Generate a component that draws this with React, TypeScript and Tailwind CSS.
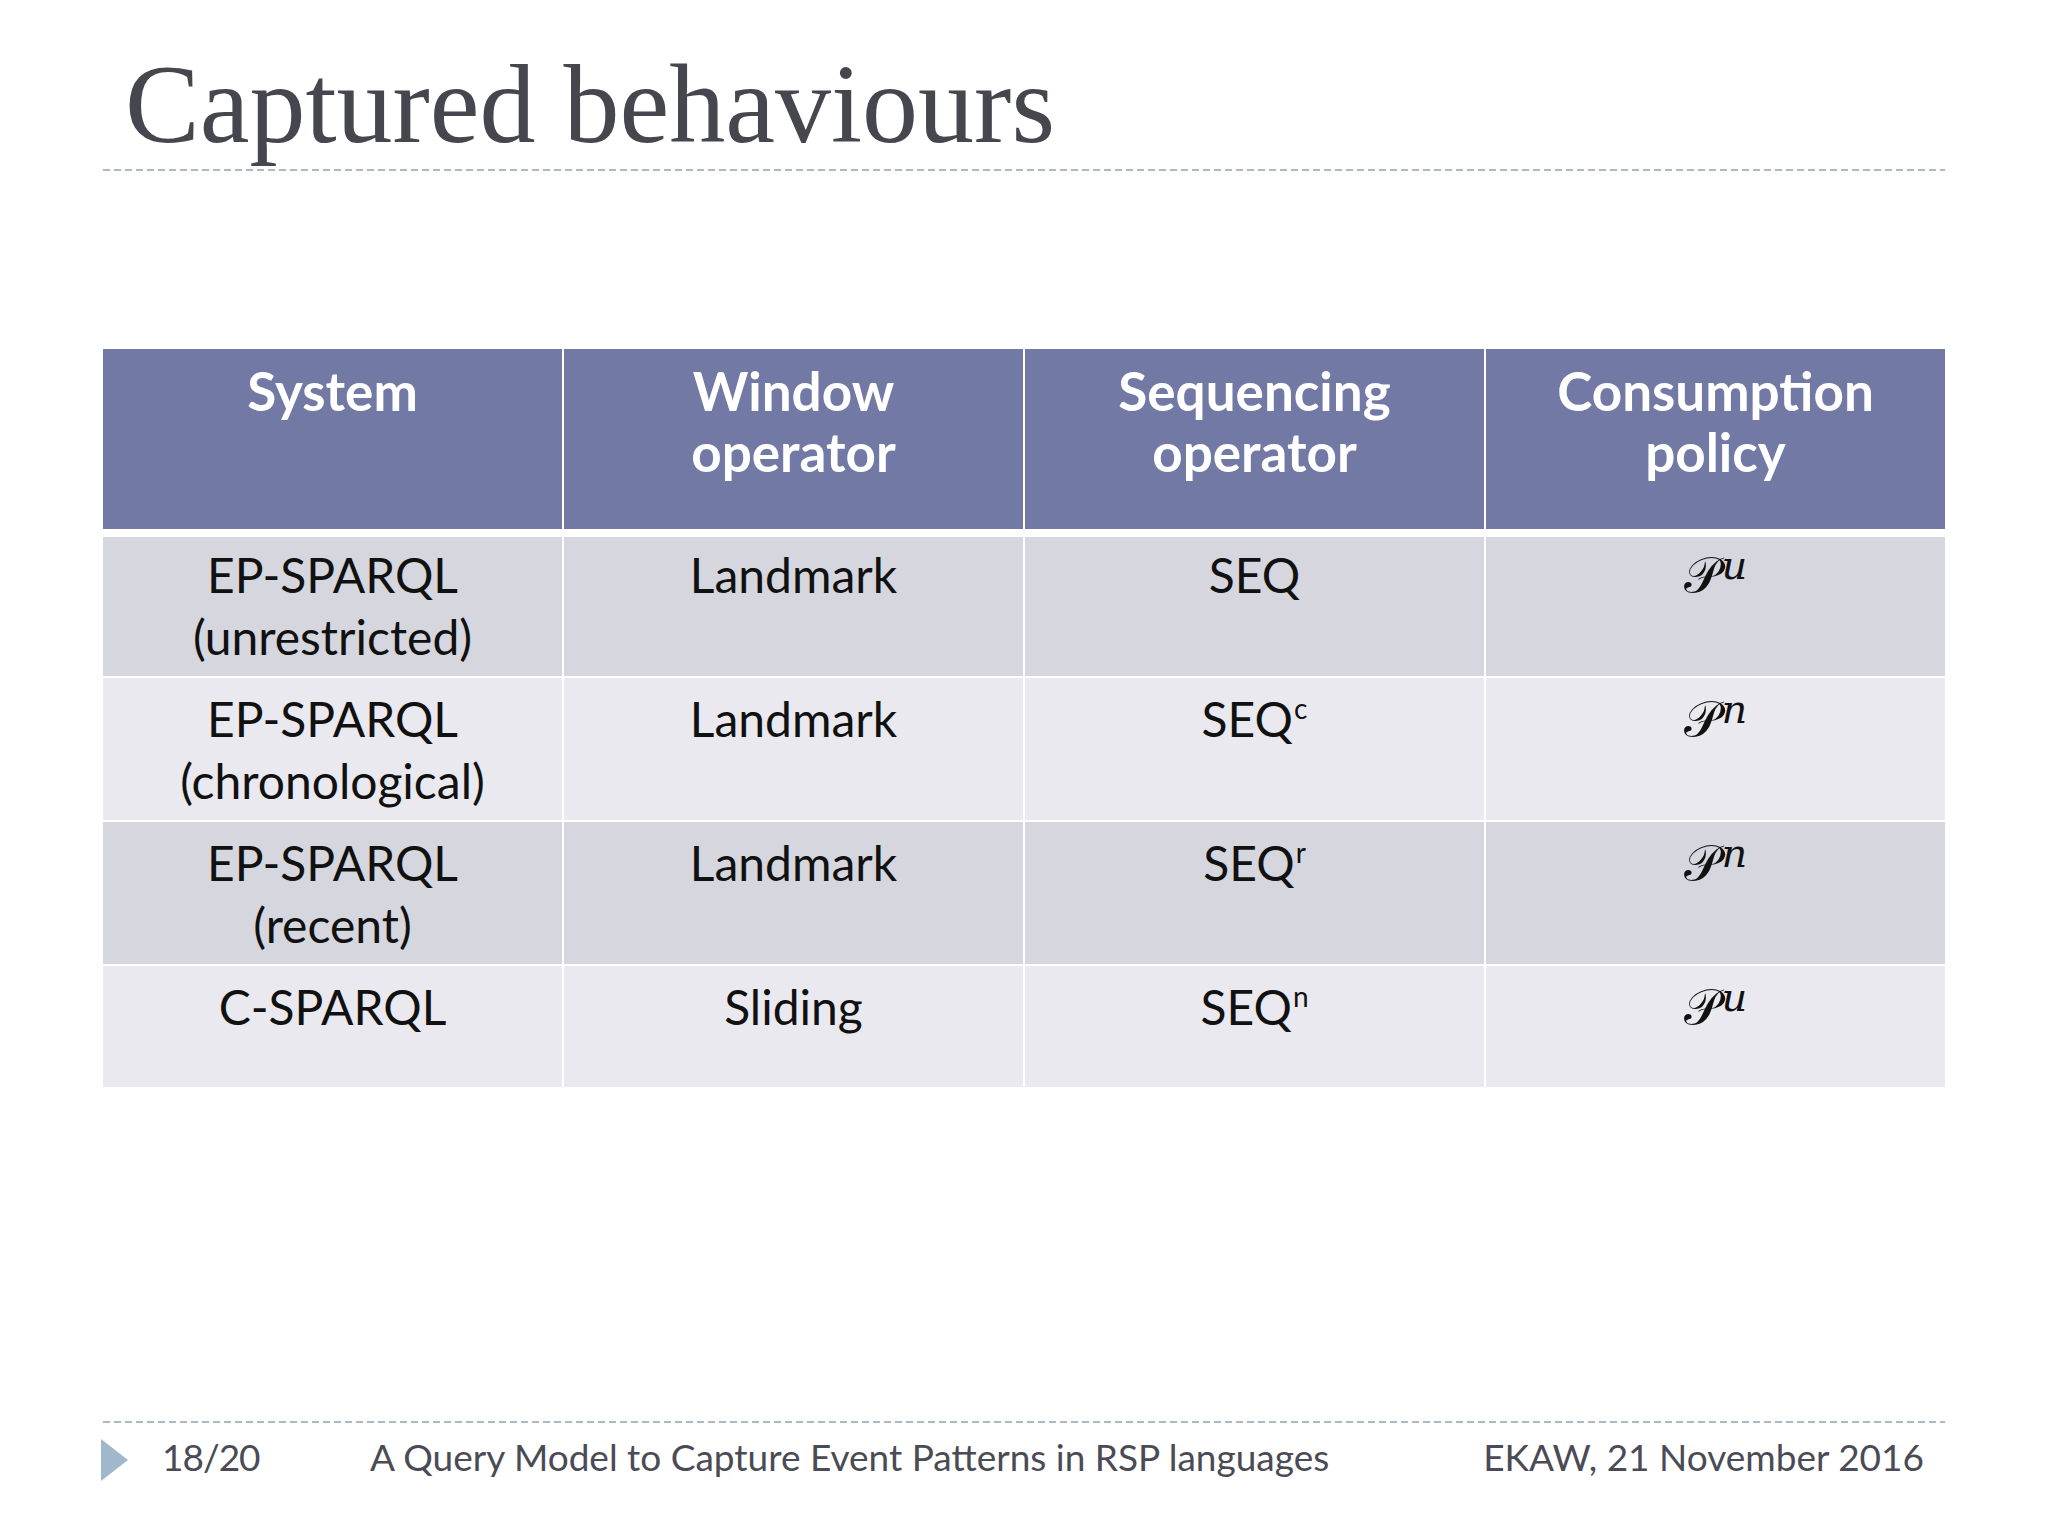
import React from 'react';

const sans = { fontFamily: 'Lato, "Open Sans", sans-serif' };

type Row = { system: string[]; window: string; seq: string; sup: string; policy: string };

const rows: Row[] = [
  { system: ['EP-SPARQL', '(unrestricted)'], window: 'Landmark', seq: 'SEQ', sup: '', policy: 'u' },
  { system: ['EP-SPARQL', '(chronological)'], window: 'Landmark', seq: 'SEQ', sup: 'c', policy: 'n' },
  { system: ['EP-SPARQL', '(recent)'], window: 'Landmark', seq: 'SEQ', sup: 'r', policy: 'n' },
  { system: ['C-SPARQL'], window: 'Sliding', seq: 'SEQ', sup: 'n', policy: 'u' },
];

const rowHeights = ['h-[139px]', 'h-[142px]', 'h-[142px]', 'h-[121px]'];
const rowColors = ['bg-[#d5d6de]', 'bg-[#e9e9ef]', 'bg-[#d5d6de]', 'bg-[#e9e9ef]'];
const rowPad = ['pt-[7px]', 'pt-[10px]', 'pt-[10px]', 'pt-[10px]'];

const Policy: React.FC<{ s: string }> = ({ s }) => (
  <span className="inline-flex items-start">
    <span className="text-[50px] leading-[62px]" style={{ fontFamily: '"DejaVu Serif", "DejaVu Sans", serif' }}>
      𝒫
    </span>
    <span
      className="text-[40px] italic leading-none relative top-[1px] ml-[2px]"
      style={{ fontFamily: '"DejaVu Serif", serif' }}
    >
      {s}
    </span>
  </span>
);

export default function App() {
  return (
    <div className="w-[2048px] h-[1536px] bg-white flex flex-col overflow-hidden" style={sans}>
      <header className="h-[169px] pl-[125px] pt-[48px]">
        <h1
          className="text-[112px] leading-none text-[#46464f]"
          style={{ fontFamily: '"Liberation Serif", "Times New Roman", serif' }}
        >
          Captured behaviours
        </h1>
      </header>
      <div className="mx-[103px] h-[2px] bg-[repeating-linear-gradient(90deg,#a9b9c6_0_7px,transparent_7px_11px)]" />

      {/* table */}
      <section className="mx-[103px] mt-[178px] flex flex-col">
        <div className="grid grid-cols-4 gap-x-[2px] h-[180px]">
          {[
            ['System'],
            ['Window', 'operator'],
            ['Sequencing', 'operator'],
            ['Consumption', 'policy'],
          ].map((h) => (
            <div key={h[0]} className="bg-[#7179a4] text-white font-bold text-[53px] leading-[61px] pt-[11px] text-center">
              {h.map((l) => (
                <div key={l}>{l}</div>
              ))}
            </div>
          ))}
        </div>
        <div className="flex flex-col gap-y-[2px] mt-[8px]">
          {rows.map((r, i) => (
            <div key={i} className={`grid grid-cols-4 gap-x-[2px] ${rowHeights[i]}`}>
              <div className={`${rowColors[i]} ${rowPad[i]} text-center text-[48px] leading-[62px] text-[#111]`}>
                {r.system.map((l) => (
                  <div key={l}>{l}</div>
                ))}
              </div>
              <div className={`${rowColors[i]} ${rowPad[i]} text-center text-[48px] leading-[62px] text-[#111]`}>
                {r.window}
              </div>
              <div className={`${rowColors[i]} ${rowPad[i]} text-center text-[48px] leading-[62px] text-[#111]`}>
                {r.seq}
                {r.sup && <span className="text-[28px] relative top-[-18px] ml-[1px]">{r.sup}</span>}
              </div>
              <div className={`${rowColors[i]} ${rowPad[i]} text-center text-[#111]`}>
                <Policy s={r.policy} />
              </div>
            </div>
          ))}
        </div>
      </section>

      {/* footer */}
      <div className="mx-[103px] mt-[334px] h-[2px] bg-[repeating-linear-gradient(90deg,#a9b9c6_0_7px,transparent_7px_11px)]" />
      <footer className="mt-[16px] h-[42px] pl-[101px] pr-[124px] flex items-center text-[37px] text-[#4a4b55]">
        <svg width="27" height="42" viewBox="0 0 27 42" className="shrink-0">
          <polygon points="0,0 27,21 0,42" fill="#a0b8cc" />
        </svg>
        <span className="ml-[34px] w-[208px] tracking-[-1px] relative top-[-3px]">18/20</span>
        <span className="relative top-[-3px]">A Query Model to Capture Event Patterns in RSP languages</span>
        <span className="ml-auto relative top-[-3px]">EKAW, 21 November 2016</span>
      </footer>
    </div>
  );
}
